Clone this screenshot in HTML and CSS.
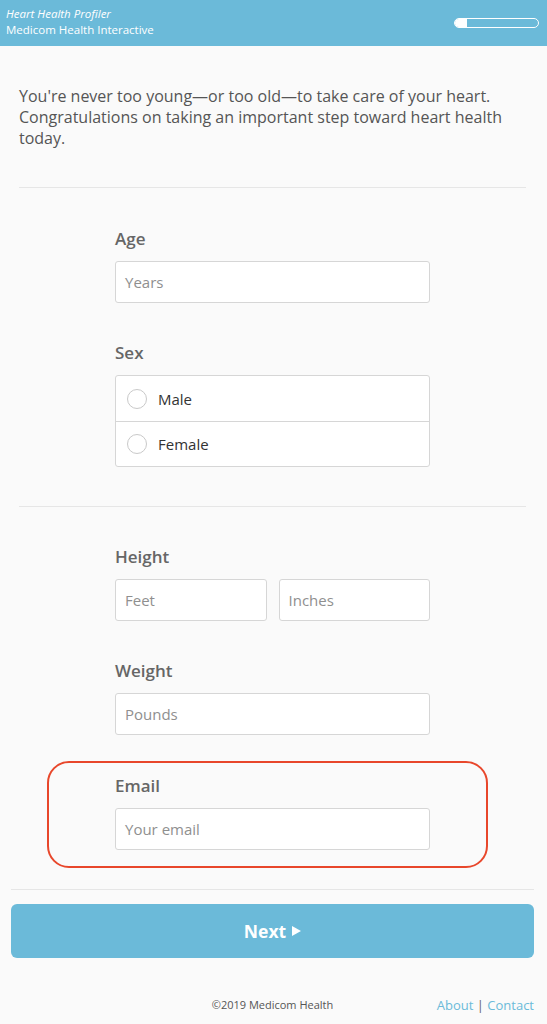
FILE: index.html
```html
<!DOCTYPE html>
<html lang="en">
<head>
<meta charset="utf-8">
<title>Heart Health Profiler</title>
<link rel="stylesheet" href="styles.css">
</head>
<body>
<header class="topbar">
  <div class="brand">
    <div class="brand-title">Heart Health Profiler</div>
    <div class="brand-sub">Medicom Health Interactive</div>
  </div>
  <div class="progress"><div class="progress-fill" style="width: 12px"></div></div>
</header>

<main class="content">
  <p class="intro">You're never too young—or too old—to take care of your heart. Congratulations on taking an important step toward heart health today.</p>
  <hr class="divider">

  <section class="form-section">
    <div class="field">
      <label class="field-label">Age</label>
      <div class="input">Years</div>
    </div>
    <div class="field">
      <label class="field-label">Sex</label>
      <div class="radio-group">
        <div class="radio-row"><span class="radio"></span><span class="radio-text">Male</span></div>
        <div class="radio-row"><span class="radio"></span><span class="radio-text">Female</span></div>
      </div>
    </div>
  </section>
  <hr class="divider">

  <section class="form-section form-section-last">
    <div class="field">
      <label class="field-label">Height</label>
      <div class="input-pair">
        <div class="input">Feet</div>
        <div class="input">Inches</div>
      </div>
    </div>
    <div class="field">
      <label class="field-label">Weight</label>
      <div class="input">Pounds</div>
    </div>
    <div class="field field-highlight">
      <label class="field-label">Email</label>
      <div class="input">Your email</div>
    </div>
  </section>
</main>

<div class="actions">
  <hr class="divider-wide">
  <button class="next-btn">Next <span class="tri"></span></button>
</div>

<footer class="footer">
  <span></span>
  <span class="copy">©2019 Medicom Health</span>
  <span class="links"><a href="#">About</a> <span class="sep">|</span> <a href="#">Contact</a></span>
</footer>
</body>
</html>
```

FILE: styles.css
```css
* { box-sizing: border-box; }

body {
  margin: 0;
  background: #fafafa;
  font-family: "Open Sans", "Liberation Sans", sans-serif;
  color: #555;
}

.topbar {
  height: 46px;
  background: #6bbad9;
  display: flex;
  justify-content: space-between;
  align-items: flex-start;
  padding: 6px 8px 0 6px;
  color: #fff;
}

.brand-title {
  font-style: italic;
  font-size: 11.5px;
  line-height: 16px;
}

.brand-sub {
  font-size: 11.5px;
  line-height: 16px;
}

.progress {
  margin-top: 12px;
  width: 85px;
  height: 10px;
  border: 1.5px solid #fff;
  border-radius: 5px;
  overflow: hidden;
}

.progress-fill {
  height: 100%;
  background: #fff;
}

.content {
  padding: 0 21px 0 19px;
}

.intro {
  margin: 40px 0 0;
  font-size: 16px;
  line-height: 21px;
  color: #555;
}

.divider {
  margin: 38px 0 0;
  border: 0;
  border-top: 1px solid #e6e6e6;
}

.form-section {
  width: 315px;
  margin: 0 auto;
  padding: 40px 0 39px;
  display: flex;
  flex-direction: column;
  gap: 39px;
}

.form-section + .divider { margin-top: 0; }

.form-section-last {
  padding: 39px 0 0;
}

.field {
  display: flex;
  flex-direction: column;
  gap: 11px;
}

.field-label {
  font-size: 17px;
  font-weight: 600;
  line-height: 22px;
  color: #666;
}

.input {
  height: 42px;
  background: #fff;
  border: 1px solid #d6d6d6;
  border-radius: 3px;
  padding-left: 9px;
  display: flex;
  align-items: center;
  font-size: 15px;
  color: #8f8f8f;
}

.input-pair {
  display: grid;
  grid-template-columns: 1fr 1fr;
  gap: 12px;
}

.radio-group {
  background: #fff;
  border: 1px solid #d6d6d6;
  border-radius: 3px;
}

.radio-row {
  height: 45px;
  display: flex;
  align-items: center;
  padding-left: 11px;
  gap: 11px;
}

.radio-row + .radio-row { border-top: 1px solid #d6d6d6; }

.radio {
  width: 20px;
  height: 20px;
  border: 1.5px solid #c9c9c9;
  border-radius: 50%;
}

.radio-text {
  font-size: 15px;
  color: #333;
}

.field-highlight {
  margin: -13px -58px 0 -68px;
  padding: 12px 56px 16px 66px;
  border: 2px solid #e8472b;
  border-radius: 22px;
}

.actions {
  padding: 21px 13px 0 11px;
}

.divider-wide {
  margin: 0;
  border: 0;
  border-top: 1px solid #e6e6e6;
}

.next-btn {
  margin-top: 14px;
  width: 100%;
  height: 54px;
  border: 0;
  border-radius: 6px;
  background: #6bbad9;
  color: #fff;
  font-family: "Open Sans", "Liberation Sans", sans-serif;
  font-size: 17.5px;
  font-weight: 700;
  display: flex;
  align-items: center;
  justify-content: center;
  gap: 6px;
}

.tri {
  width: 0;
  height: 0;
  border-top: 5.5px solid transparent;
  border-bottom: 5.5px solid transparent;
  border-left: 9px solid #fff;
}

.footer {
  margin-top: 38px;
  padding: 0 13px 0 11px;
  display: grid;
  grid-template-columns: 1fr auto 1fr;
  align-items: center;
  line-height: 18px;
}

.copy {
  font-size: 11px;
  color: #555;
}

.links {
  justify-self: end;
  font-size: 13px;
  color: #6bbad9;
}

.links a {
  color: #6bbad9;
  text-decoration: none;
}

.sep { color: #666; }
```
